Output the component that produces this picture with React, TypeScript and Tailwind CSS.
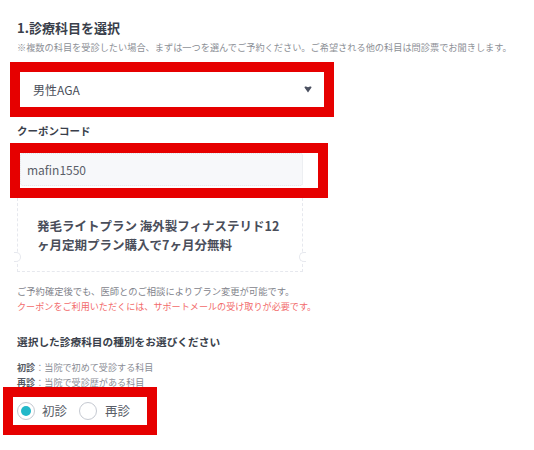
export default function App() {
  return (
    <div
      className="w-[534px] h-[450px] overflow-hidden bg-white pl-[17px] pt-[18px]"
      style={{ fontFamily: '"Noto Sans CJK JP", "Noto Sans", sans-serif' }}
    >
      {/* 診療科目 */}
      <h2 className="text-[13px] font-bold leading-[19px] text-[#3a3f4b]">1.診療科目を選択</h2>
      <p className="mt-[3px] whitespace-nowrap text-[9.2px] leading-[14px] text-[#8c8f96]">
        ※複数の科目を受診したい場合、まずは一つを選んでご予約ください。ご希望される他の科目は問診票でお聞きします。
      </p>
      <div className="mt-[8px] -ml-[7px] w-[324px] border-[10px] border-[#e60000]">
        <div className="flex h-[35px] items-center justify-between bg-white pl-[13px] pr-[12px]">
          <span className="text-[12px] text-[#4a4e5a]">男性AGA</span>
          <svg width="8" height="7" viewBox="0 0 8 7">
            <path d="M0.5 1.4 C0.5 0.5 1.3 0.2 2 0.5 L4 1.3 L6 0.5 C6.7 0.2 7.5 0.5 7.5 1.4 L4 6.6 Z" fill="#4b5060" />
          </svg>
        </div>
      </div>

      {/* クーポン */}
      <p className="mt-[6px] text-[10.5px] font-bold leading-[16px] text-[#3a3f4b]">クーポンコード</p>
      <div className="mt-[4px] -ml-[7px] w-[318px] border-[10px] border-[#e60000] bg-white pb-[2px]">
        <div className="flex h-[33px] w-[283px] items-center rounded-[3px] border border-dotted border-[#e3e5ea] bg-[#f7f8fa] pl-[6px]">
          <span className="text-[12px] text-[#5a5e68]">mafin1550</span>
        </div>
      </div>
      <div className="relative h-[74px] w-[286px] border border-t-0 border-dashed border-[#e6e8ee] pl-[19px] pt-[19px]">
        <p className="text-[12.5px] font-bold leading-[18.5px] text-[#4a4e5a]">
          発毛ライトプラン 海外製フィナステリド12
          <br />
          ヶ月定期プラン購入で7ヶ月分無料
        </p>
        <span className="absolute -left-[4px] top-[54px] h-[10px] w-[7px] rounded-r-full border border-l-0 border-[#e6e8ee] bg-white" />
        <span className="absolute -right-[4px] top-[54px] h-[10px] w-[7px] rounded-l-full border border-r-0 border-[#e6e8ee] bg-white" />
      </div>
      <p className="mt-[12px] whitespace-nowrap text-[9.3px] leading-[15px] text-[#7f838b]">
        ご予約確定後でも、医師とのご相談によりプラン変更が可能です。
      </p>
      <p className="whitespace-nowrap text-[9.1px] leading-[15px] text-[#f26b6b]">
        クーポンをご利用いただくには、サポートメールの受け取りが必要です。
      </p>

      {/* 種別 */}
      <h3 className="mt-[20px] text-[10.7px] font-bold leading-[16px] text-[#3a3f4b]">選択した診療科目の種別をお選びください</h3>
      <div className="mt-[10px] text-[9.1px] leading-[15px] text-[#8a8d95]">
        <p>
          <span className="font-bold text-[#555a64]">初診</span>：当院で初めて受診する科目
        </p>
        <p>
          <span className="font-bold text-[#555a64]">再診</span>：当院で受診歴がある科目
        </p>
      </div>
      <div className="relative -mt-[3px] -ml-[14px] w-[154px] border-[10px] border-[#e60000] bg-white">
        <div className="flex h-[28px] items-center pl-[4px]">
          <span className="flex h-[18px] w-[18px] items-center justify-center rounded-full border-[1.5px] border-[#c5c9d1]">
            <span className="h-[10px] w-[10px] rounded-full bg-[#22b8c9]" />
          </span>
          <span className="ml-[7px] text-[12.5px] text-[#5a5e68]">初診</span>
          <span className="ml-[12px] h-[18px] w-[18px] rounded-full border-[1.5px] border-[#c5c9d1]" />
          <span className="ml-[8px] text-[12.5px] text-[#5a5e68]">再診</span>
        </div>
      </div>
    </div>
  )
}
